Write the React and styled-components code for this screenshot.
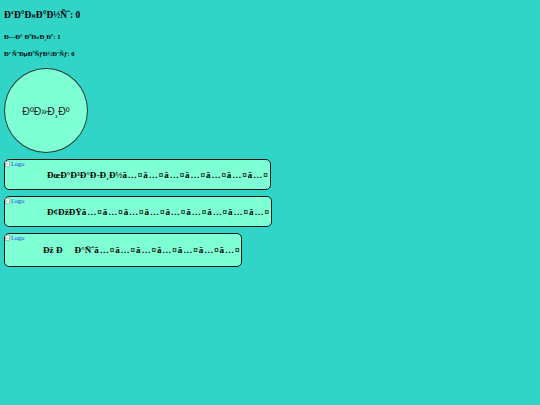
import styled, { createGlobalStyle } from 'styled-components';

const GlobalStyle = createGlobalStyle`
  html, body {
    margin: 0;
    background: #30d5c8;
  }
  body {
    font-family: "Liberation Serif", "Times New Roman", serif;
    color: #000;
  }
`;

const Page = styled.div`
  padding: 4px;
  display: flex;
  flex-direction: column;
  align-items: flex-start;
`;

const Balance = styled.h3`
  margin: 6px 0 0;
  font-size: 9.4px;
  line-height: 11px;
`;

const Stat = styled.h5`
  margin: ${(p) => p.$top}px 0 0;
  font-size: 6.6px;
  line-height: 8px;
`;

const ClickButton = styled.button`
  margin-top: 10px;
  width: 84px;
  height: 85px;
  border-radius: 50%;
  border: 1px solid #2a3a36;
  background: #7fffd4;
  font-family: "Liberation Sans", Arial, sans-serif;
  font-size: 10.5px;
  color: #1c2a26;
  padding: 0;
`;

const Cards = styled.div`
  margin-top: 6px;
  display: flex;
  flex-direction: column;
  align-items: flex-start;
  gap: 6px;
`;

const Card = styled.div`
  display: flex;
  align-items: center;
  height: ${(p) => p.$height}px;
  box-sizing: border-box;
  border: 1.5px solid #0e1a18;
  border-radius: 5px;
  background: #7fffd4;
  padding-right: 1px;
`;

const Logo = styled.span`
  align-self: flex-start;
  display: flex;
  align-items: center;
  gap: 1px;
  width: ${(p) => p.$width}px;
  font-size: 6.4px;
  line-height: 7px;
  color: #1a35e8;
  white-space: nowrap;
`;

const CardTitle = styled.h4`
  margin: 0;
  font-size: 9.1px;
  white-space: nowrap;
`;

const Gap = styled.span`
  display: inline-block;
  width: ${(p) => p.$width}px;
`;

const Filler = styled.span`
  letter-spacing: 0.9px;
`;

const BrokenImage = () => (
  <svg width="5" height="6" viewBox="0 0 10 12">
    <rect x="0.5" y="0.5" width="8" height="10" fill="#fff" stroke="#8a8a8a" />
    <path d="M2 8 L4 5 L6 7 L7 6" stroke="#3a9a3a" fill="none" />
  </svg>
);

const fill = (n) => 'ã…¤'.repeat(n);

const cards = [
  { title: ['ÐœÐ°Ð³Ð°Ð·Ð¸Ð½'], count: 7, indent: 42, height: 31 },
  { title: ['Ð¢ÐžÐŸ'], count: 9, indent: 42, height: 31 },
  { title: ['Ðž Ð', 'Ð°Ñˆ'], count: 7, indent: 38, height: 34 },
];

export default function App() {
  return (
    <>
      <GlobalStyle />
      <Page>
        <Balance>Ð‘Ð°Ð»Ð°Ð½Ñˆ: 0</Balance>
        <Stat $top={12}>Ð—Ð° ÐºÐ»Ð¸Ðº: 1</Stat>
        <Stat $top={9}>Ð’ ÑˆÐµÐºÑƒÐ½Ð´Ñƒ: 0</Stat>
        <ClickButton>ÐºÐ»Ð¸Ðº</ClickButton>
        <Cards>
          {cards.map((c) => (
            <Card key={c.title[0]} $height={c.height}>
              <Logo $width={c.indent}>
                <BrokenImage />
                Logo
              </Logo>
              <CardTitle>
                {c.title[0]}
                {c.title[1] && (
                  <>
                    <Gap $width={12} />
                    {c.title[1]}
                  </>
                )}
                <Filler>{fill(c.count)}</Filler>
              </CardTitle>
            </Card>
          ))}
        </Cards>
      </Page>
    </>
  );
}
